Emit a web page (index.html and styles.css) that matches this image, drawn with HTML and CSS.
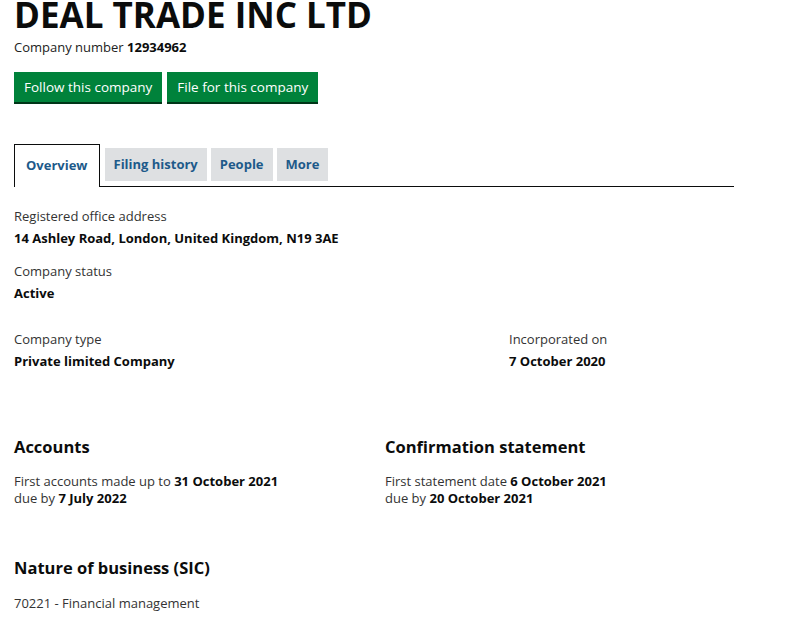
FILE: index.html
```html
<!DOCTYPE html>
<html lang="en">
<head>
<meta charset="utf-8">
<title>DEAL TRADE INC LTD</title>
<link rel="stylesheet" href="styles.css">
</head>
<body>
<main class="page">
  <h1 class="title">DEAL TRADE INC LTD</h1>
  <p class="company-number">Company number <strong>12934962</strong></p>
  <div class="actions">
    <a class="btn" href="#">Follow this company</a>
    <a class="btn" href="#">File for this company</a>
  </div>
  <nav class="tabs">
    <a class="tab active" href="#">Overview</a>
    <a class="tab" href="#">Filing history</a>
    <a class="tab" href="#">People</a>
    <a class="tab" href="#">More</a>
  </nav>
  <dl class="field f-address">
    <dt>Registered office address</dt>
    <dd>14 Ashley Road, London, United Kingdom, N19 3AE</dd>
  </dl>
  <dl class="field f-status">
    <dt>Company status</dt>
    <dd>Active</dd>
  </dl>
  <div class="row-type">
    <dl class="field">
      <dt>Company type</dt>
      <dd>Private limited Company</dd>
    </dl>
    <dl class="field">
      <dt>Incorporated on</dt>
      <dd>7 October 2020</dd>
    </dl>
  </div>
  <div class="row-sections">
    <section class="sec">
      <h2>Accounts</h2>
      <p>First accounts made up to <strong>31 October 2021</strong><br>due by <strong>7 July 2022</strong></p>
    </section>
    <section class="sec">
      <h2>Confirmation statement</h2>
      <p>First statement date <strong>6 October 2021</strong><br>due by <strong>20 October 2021</strong></p>
    </section>
  </div>
  <section class="sec sic">
    <h2>Nature of business (SIC)</h2>
    <p>70221 - Financial management</p>
  </section>
</main>
</body>
</html>
```

FILE: styles.css
```css
* { box-sizing: border-box; }
html, body { margin: 0; padding: 0; background: #fff; }
body {
  font-family: "Open Sans", "Helvetica Neue", Arial, sans-serif;
  color: #0b0c0c;
}
.page {
  padding: 0 55px 0 14px;
  width: 789px;
}
.title {
  font-size: 35px;
  font-weight: 700;
  line-height: 28px;
  padding-top: 1px;
  margin: 0;
  letter-spacing: 0;
}
.company-number {
  font-size: 13px;
  line-height: 18px;
  margin: 9px 0 0;
  color: #222;
}
.company-number strong { color: #0b0c0c; }
.actions {
  display: flex;
  gap: 5px;
  margin-top: 16px;
}
.btn {
  display: block;
  background: #00823b;
  color: #fff;
  font-size: 13.5px;
  line-height: 30px;
  height: 30px;
  padding: 0 10px;
  text-decoration: none;
  box-shadow: 0 2px 0 #003618;
}
.tabs {
  display: flex;
  align-items: flex-start;
  gap: 4px;
  margin-top: 42px;
  border-bottom: 1px solid #0b0c0c;
  height: 43px;
}
.tab {
  display: block;
  font-size: 13px;
  font-weight: 700;
  color: #1d5a8a;
  text-decoration: none;
  background: #dee0e2;
  height: 33px;
  line-height: 33px;
  margin-top: 4px;
  padding: 0 9px;
}
.tab.active {
  background: #fff;
  border: 1px solid #0b0c0c;
  border-bottom: 0;
  height: 43px;
  margin-top: 0;
  line-height: 40px;
  padding: 0 11px;
  margin-right: 1px;
}
.field { margin: 0; }
.field dt {
  font-size: 13px;
  line-height: 18px;
  color: #333;
}
.field dd {
  margin: 4px 0 0;
  font-size: 13px;
  line-height: 18px;
  font-weight: 700;
}
.f-address { margin-top: 20px; }
.f-status { margin-top: 15px; }
.row-type {
  display: grid;
  grid-template-columns: 495px 1fr;
  margin-top: 28px;
}
.row-sections {
  display: grid;
  grid-template-columns: 371px 1fr;
  margin-top: 66px;
}
.sec h2 {
  font-size: 16.5px;
  font-weight: 700;
  line-height: 22px;
  margin: 0;
}
.sec p {
  font-size: 13px;
  line-height: 17px;
  margin: 15px 0 0;
  color: #333;
}
.sec p strong { color: #0b0c0c; }
.sic { margin-top: 50px; }
.sic p { margin-top: 16px; }
```
